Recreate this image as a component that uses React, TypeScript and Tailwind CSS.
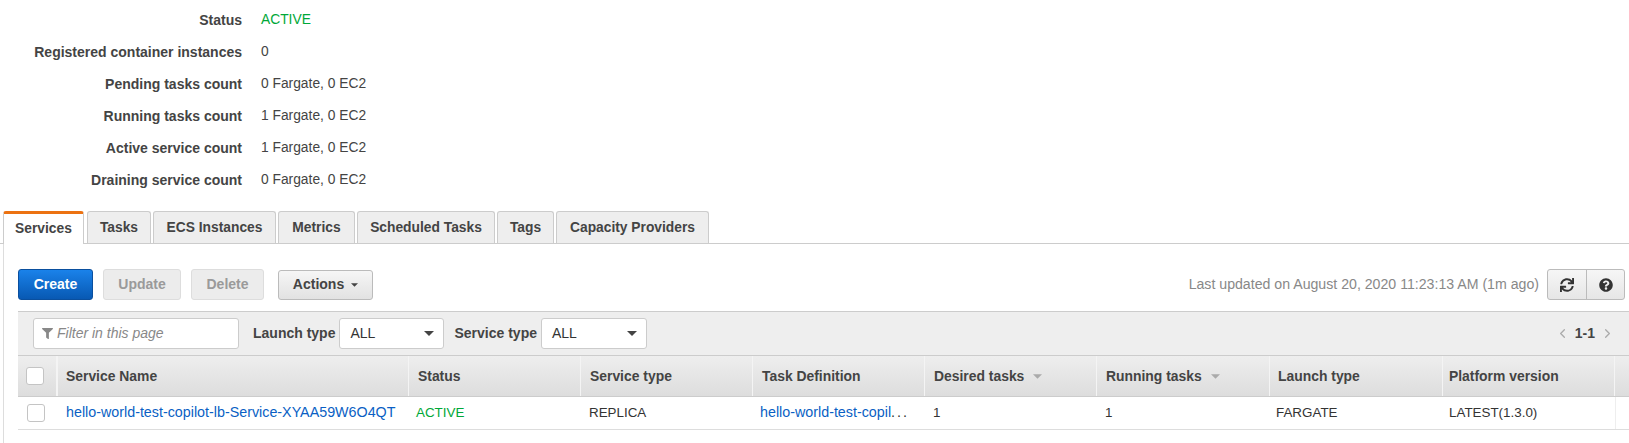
import { FaFilter, FaQuestionCircle, FaSync } from "react-icons/fa";
import { FiChevronLeft, FiChevronRight } from "react-icons/fi";

const SUMMARY = [
  { label: "Status", value: "ACTIVE", green: true },
  { label: "Registered container instances", value: "0" },
  { label: "Pending tasks count", value: "0 Fargate, 0 EC2" },
  { label: "Running tasks count", value: "1 Fargate, 0 EC2" },
  { label: "Active service count", value: "1 Fargate, 0 EC2" },
  { label: "Draining service count", value: "0 Fargate, 0 EC2" },
];

const TABS = [
  { name: "Tasks", width: "w-[64px]" },
  { name: "ECS Instances", width: "w-[123px]" },
  { name: "Metrics", width: "w-[77px]" },
  { name: "Scheduled Tasks", width: "w-[138px]" },
  { name: "Tags", width: "w-[57px]" },
  { name: "Capacity Providers", width: "w-[153px]" },
];

const COLUMNS = [
  { name: "Service Name", width: "w-[351px] pl-[8px]" },
  { name: "Status", width: "w-[172px] pl-[9px]" },
  { name: "Service type", width: "w-[172px] pl-[9px]" },
  { name: "Task Definition", width: "w-[172px] pl-[9px]" },
  { name: "Desired tasks", width: "w-[172px] pl-[9px]", sort: true },
  { name: "Running tasks", width: "w-[173px] pl-[9px]", sort: true },
  { name: "Launch type", width: "w-[173px] pl-[8px]" },
  { name: "Platform version", width: "w-[172px] pl-[6px]" },
];

function Caret({ className }: { className: string }) {
  return (
    <svg viewBox="0 0 10 5" className={className} fill="currentColor">
      <polygon points="0,0 10,0 5,5" />
    </svg>
  );
}

function Checkbox() {
  return <span className="block h-[18px] w-[18px] rounded-[3px] border border-[#c4c4c4] bg-white" />;
}

function SelectBox({ width }: { width: string }) {
  return (
    <div className={`flex h-[31px] items-center justify-between rounded-[3px] border border-[#ccc] bg-white pl-[10px] pr-[9px] text-[#333] ${width}`}>
      ALL
      <Caret className="h-[5px] w-[10px] text-[#444]" />
    </div>
  );
}

export default function App() {
  return (
    <div className="h-[443px] w-[1629px] overflow-hidden bg-white pt-[4px] font-['Liberation_Sans',Arial,sans-serif] text-[14px] text-[#444]">
      <dl className="flex flex-col">
        {SUMMARY.map((row) => (
          <div key={row.label} className="flex h-[32px] items-center">
            <dt className="w-[242px] text-right font-bold">{row.label}</dt>
            <dd className={`ml-[19px] text-[13.8px] ${row.green ? "text-[#00a838]" : ""}`}>{row.value}</dd>
          </div>
        ))}
      </dl>

      <div className="mt-[15px] flex h-[33px] items-start border-b border-[#ccc] pl-[3px] text-[13.8px]">
        <div className="relative z-10 flex h-[33px] w-[81px] items-center justify-center rounded-t-[3px] border-x border-[#ccc] border-t-[3px] border-t-[#ec7211] bg-white font-bold">
          Services
        </div>
        <div className="ml-[3px] flex gap-[2px]">
          {TABS.map((tab) => (
            <div
              key={tab.name}
              className={`flex h-[32px] items-center justify-center rounded-t-[3px] border-x border-t border-[#ccc] bg-[#eee] pt-[2px] font-bold ${tab.width}`}
            >
              {tab.name}
            </div>
          ))}
        </div>
      </div>

      <div className="ml-[3px] h-[200px] border-l border-[#ddd] pl-[14px] pt-[25px]">
        <div className="flex h-[31px] items-center">
          <button className="h-[31px] w-[75px] rounded-[3px] border border-[#0a4f9e] bg-gradient-to-b from-[#1a82ea] to-[#0859b3] font-bold text-white">
            Create
          </button>
          <button className="ml-[10px] h-[31px] w-[78px] rounded-[3px] border border-[#ddd] bg-[#ececec] font-bold text-[#9a9a9a]">
            Update
          </button>
          <button className="ml-[10px] h-[31px] w-[73px] rounded-[3px] border border-[#ddd] bg-[#ececec] font-bold text-[#9a9a9a]">
            Delete
          </button>
          <button className="ml-[14px] flex h-[30px] w-[95px] items-center justify-center gap-[7px] rounded-[3px] border border-[#bbb] bg-gradient-to-b from-[#f6f6f6] to-[#e2e2e2] font-bold">
            Actions
            <Caret className="h-[4px] w-[7px]" />
          </button>
          <span className="ml-auto mr-[8px] text-[14.15px] text-[#888]">Last updated on August 20, 2020 11:23:13 AM (1m ago)</span>
          <div className="mr-[4px] flex h-[31px] w-[78px] rounded-[3px] border border-[#bbb] bg-gradient-to-b from-[#f6f6f6] to-[#e6e6e6]">
            <span className="flex w-[39px] items-center justify-center border-r border-[#bbb]">
              <FaSync className="h-[14px] w-[14px] text-[#333]" />
            </span>
            <span className="flex flex-1 items-center justify-center">
              <FaQuestionCircle className="h-[14px] w-[14px] text-[#333]" />
            </span>
          </div>
        </div>

        <div className="mt-[11px] flex h-[44px] items-center border-t border-[#ccc] bg-[#eee] pl-[15px] pr-[14px]">
          <div className="flex h-[31px] w-[206px] items-center rounded-[3px] border border-[#ccc] bg-white pl-[8px] italic text-[#888]">
            <FaFilter className="mr-[4px] h-[11px] w-[11px] text-[#888]" />
            Filter in this page
          </div>
          <span className="ml-[14px] mr-[4px] font-bold">Launch type</span>
          <SelectBox width="w-[105px]" />
          <span className="ml-[10px] mr-[4px] font-bold">Service type</span>
          <SelectBox width="w-[106px]" />
          <div className="ml-auto flex items-center gap-[5px]">
            <FiChevronLeft className="h-[15px] w-[15px] text-[#aaa]" />
            <span className="font-bold">1-1</span>
            <FiChevronRight className="h-[15px] w-[15px] text-[#aaa]" />
          </div>
        </div>

        <div className="flex h-[42px] border-y border-[#ccc] bg-gradient-to-b from-[#eee] to-[#ddd] text-[13.9px] font-bold">
          <div className="flex w-[40px] items-center justify-center border-r-2 border-[#f4f4f4] pr-[4px]">
            <Checkbox />
          </div>
          {COLUMNS.map((col) => (
            <div key={col.name} className={`flex items-center gap-[9px] border-r border-[#f4f4f4] ${col.width}`}>
              {col.name}
              {col.sort && <Caret className="h-[5px] w-[9px] text-[#aaa]" />}
            </div>
          ))}
        </div>

        <div className="flex h-[33px] border-b border-[#ddd] text-[13.4px] text-[#333]">
          <div className="flex w-[40px] items-center justify-center pr-[4px]">
            <Checkbox />
          </div>
          <a className="flex w-[351px] items-center pl-[8px] text-[14.3px] text-[#0a5fc4]">hello-world-test-copilot-lb-Service-XYAA59W6O4QT</a>
          <div className="flex w-[172px] items-center pl-[7px] text-[#00a838]">ACTIVE</div>
          <div className="flex w-[172px] items-center pl-[8px]">REPLICA</div>
          <a className="flex w-[172px] items-center pl-[7px] text-[14.3px] text-[#0a5fc4]">
            hello-world-test-copil<span className="tracking-[2px] text-[#333]">...</span>
          </a>
          <div className="flex w-[172px] items-center pl-[8px]">1</div>
          <div className="flex w-[173px] items-center pl-[8px]">1</div>
          <div className="flex w-[173px] items-center pl-[6px]">FARGATE</div>
          <div className="flex w-[172px] items-center pl-[6px]">LATEST(1.3.0)</div>
          <div className="flex-1 border-l border-[#eee]" />
        </div>
      </div>
    </div>
  );
}
